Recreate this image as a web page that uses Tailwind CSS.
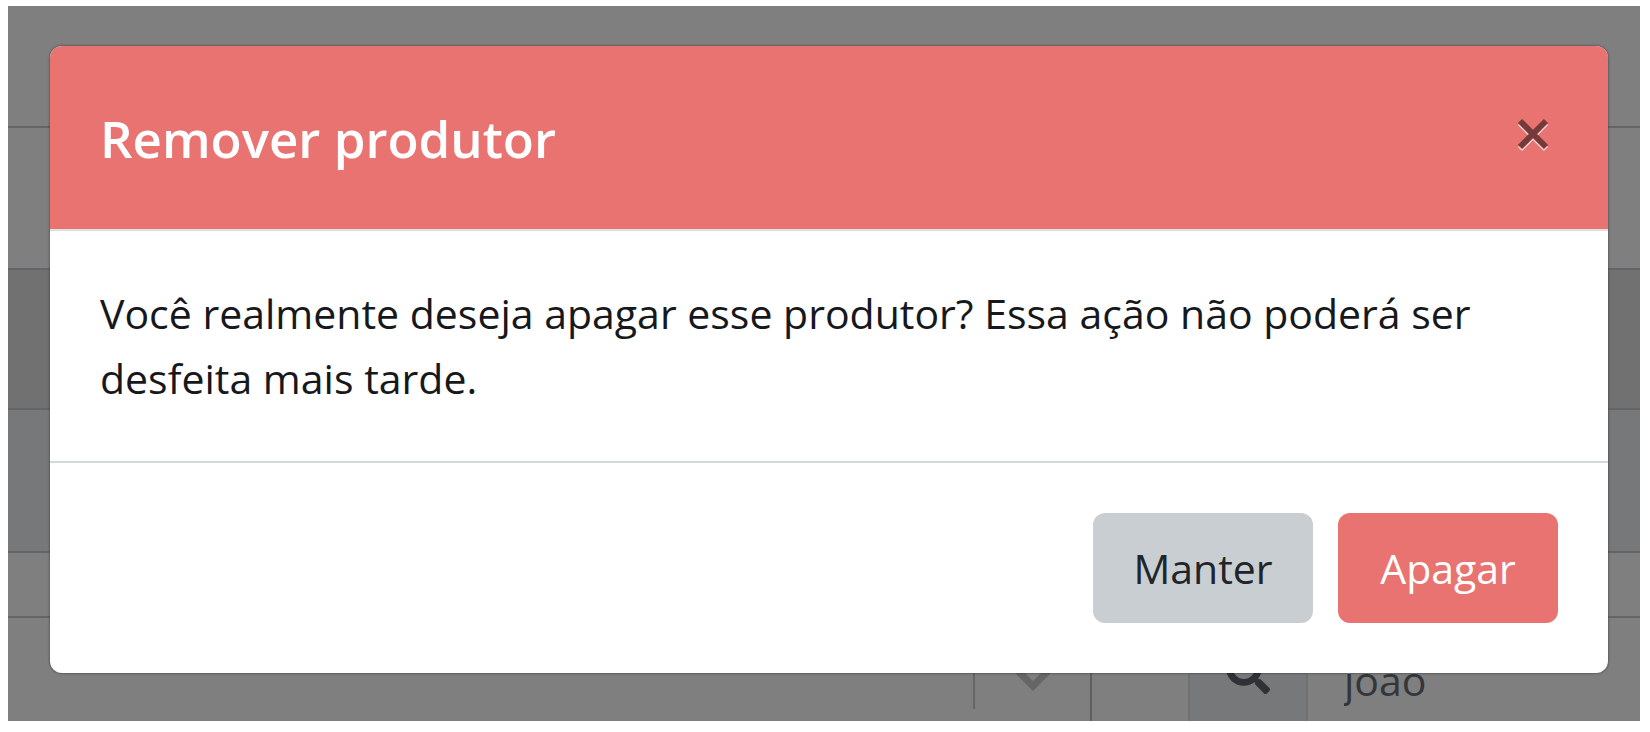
<!DOCTYPE html>
<html lang="pt-BR">
<head>
  <meta charset="UTF-8" />
  <meta name="viewport" content="width=device-width, initial-scale=1.0" />
  <title>Remover produtor</title>
  <script src="https://cdn.jsdelivr.net/npm/@tailwindcss/browser@4"></script>
</head>
<body class="bg-white pt-[6px] pr-[10px] pb-[11px] pl-2 h-screen font-['Open_Sans','Noto_Sans',sans-serif] text-[41px] leading-[65px] text-[#16181b]">

  <div class="relative h-full overflow-hidden">

    <!-- Página ao fundo -->
    <div class="h-full flex flex-col">
      <div class="h-[122px] shrink-0 border-b-2 border-[#c8cbce]"></div>
      <div class="h-[142px] shrink-0 border-b-2 border-[#c8cbce]"></div>
      <div class="h-[140px] shrink-0 border-b-2 border-[#c8cbce] bg-[#e2e2e2]"></div>
      <div class="h-[143px] shrink-0 border-b-2 border-[#c8cbce] bg-[#eef1f5]"></div>
      <div class="h-[65px] shrink-0 border-b-2 border-[#c8cbce]"></div>

      <!-- Filtros -->
      <div class="flex-1 flex min-h-0">
        <div class="flex-1 flex items-start border-r-2 border-[#c0c0c0]">
          <select aria-label="Filtro" class="flex-1 h-[91px] appearance-none border-r-2 border-[#cccccc]"></select>
          <span class="w-[115px] flex justify-center pt-[50px]">
            <svg class="w-9 h-6" viewBox="0 0 36 24" fill="none" stroke="#cccccc" stroke-width="7"><path d="M3 3 L18 18 L33 3" /></svg>
          </span>
        </div>
        <div class="w-[548px] flex pl-[96px]">
          <label for="busca" class="w-[120px] shrink-0 flex justify-center pt-[32px] bg-[#eef1f5] border-x-2 border-[#e2e5e9]">
            <svg class="w-11 h-11" viewBox="0 0 512 512" fill="#5c646c"><path d="M505 442.700 405.300 343c-4.500-4.500-10.600-7-17-7H372c27.600-35.300 44-79.700 44-128C416 93.100 322.900 0 208 0S0 93.100 0 208s93.100 208 208 208c48.300 0 92.700-16.400 128-44v16.300c0 6.400 2.500 12.500 7 17l99.700 99.700c9.400 9.400 24.600 9.400 33.900 0l28.300-28.300c9.400-9.400 9.400-24.600.1-34zM208 336c-70.700 0-128-57.200-128-128 0-70.700 57.200-128 128-128 70.700 0 128 57.200 128 128 0 70.700-57.200 128-128 128z" /></svg>
          </label>
          <input id="busca" type="text" value="joão" class="min-w-0 flex-1 h-[124px] pl-[36px] text-[#666e78]" />
        </div>
      </div>
    </div>

    <!-- Modal -->
    <div class="absolute inset-0 bg-black/50 pt-10 pr-8 pl-[42px]">
      <div role="dialog" aria-labelledby="titulo" class="bg-white rounded-xl overflow-hidden shadow-[0_0_2px_1px_rgba(0,0,0,0.25)]">
        <div class="h-[185px] flex items-start justify-between bg-[#e97371] border-b-2 border-[#dee2e6] px-[50px] pt-[50px]">
          <h5 id="titulo" class="text-[51px] leading-[84px] font-semibold text-white">Remover produtor</h5>
          <button type="button" aria-label="Fechar" class="mt-4 p-1 mr-[3px]">
            <svg class="w-9 h-9" viewBox="0 0 36 36" fill="none" stroke-width="6">
              <path d="M5 7 L31 33 M31 7 L5 33" stroke="#f6cfce" />
              <path d="M5 5 L31 31 M31 5 L5 31" stroke="#753a39" />
            </svg>
          </button>
        </div>
        <div class="p-[50px]">
          <p>Você realmente deseja apagar esse produtor? Essa ação não poderá ser desfeita mais tarde.</p>
        </div>
        <div class="flex justify-end gap-[25px] border-t-2 border-[#d3d8dc] p-[50px]">
          <button type="button" class="w-[220px] h-[110px] rounded-xl bg-[#c9ced2] text-[#212529]">Manter</button>
          <button type="button" class="w-[220px] h-[110px] rounded-xl bg-[#e97371] text-white">Apagar</button>
        </div>
      </div>
    </div>

  </div>

</body>
</html>
